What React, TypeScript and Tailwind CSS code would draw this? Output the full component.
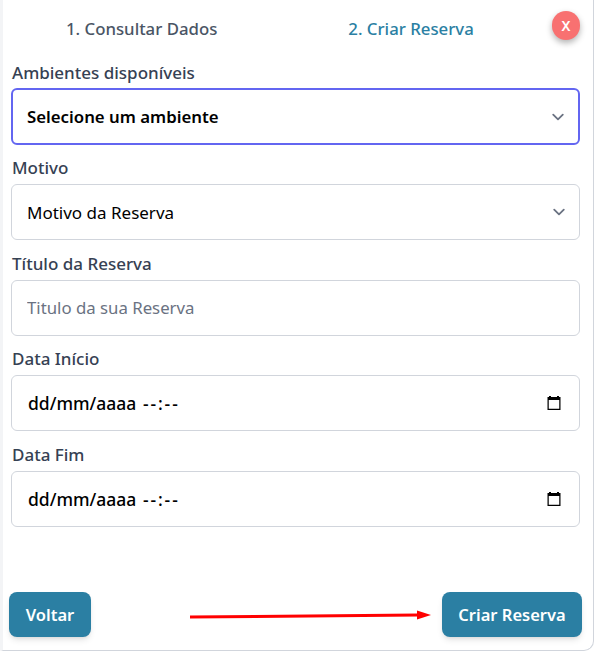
const font = { fontFamily: '"Noto Sans", sans-serif' };

function Chevron() {
  return (
    <svg className="absolute right-[8px] top-1/2 -translate-y-1/2 w-[24px] h-[24px] text-gray-500" viewBox="0 0 20 20" fill="none">
      <path d="M6 8l4 4 4-4" stroke="currentColor" strokeWidth="1.5" strokeLinecap="round" strokeLinejoin="round" />
    </svg>
  );
}

function CalendarIcon() {
  return (
    <svg className="w-[16px] h-[16px]" viewBox="0 0 16 16" fill="none">
      <path d="M3 1h2v1h6V1h2v1h1.5v13h-13V2H3z" fill="#000" />
      <rect x="2.75" y="5" width="10.5" height="8.75" fill="#fff" />
    </svg>
  );
}

function Field({ label, children, cls, gap = "mb-[4px]" }: { label: string; children: React.ReactNode; cls: string; gap?: string }) {
  return (
    <div className={cls}>
      <label className={`block ml-[1px] text-[17px] leading-[24px] font-medium text-gray-700 ${gap}`}>{label}</label>
      {children}
    </div>
  );
}

function DateField() {
  return (
    <div className="flex items-center justify-between h-[56px] pl-[16px] pr-[17px] bg-white border border-gray-300 rounded-[6px] text-[17.5px] font-medium text-black">
      <span>
        dd/mm/aaaa <span className="ml-[2px] tracking-[1.9px]">--:--</span>
      </span>
      <CalendarIcon />
    </div>
  );
}

export default function App() {
  return (
    <div style={font} className="w-[594px] h-[651px] bg-white overflow-hidden">
      <div className="relative h-full flex flex-col bg-white border-b border-r border-gray-300 rounded-br-[10px] border-l-[3px] border-l-gray-100">
        <div className="flex h-[61px] pl-[63px] pt-[17px] text-[16.8px] leading-[24px] font-medium">
          <span className="text-gray-600">1. Consultar Dados</span>
          <span className="ml-[131px] text-[#2b7fa3]">2. Criar Reserva</span>
        </div>
        <button className="absolute top-[11px] right-[13px] w-[28px] h-[29px] rounded-full bg-[#f87171] text-white text-[14px] font-semibold shadow-[0_3px_6px_rgba(0,0,0,0.3)]">
          X
        </button>

        <div className="pl-[8px] pr-[13px]">
          <Field label="Ambientes disponíveis" cls="" gap="mb-[3px]">
            <div className="relative flex items-center h-[57px] pl-[14px] border-2 border-[#6366f1] rounded-[6px] text-[16.8px] font-semibold text-black">
              Selecione um ambiente
              <Chevron />
            </div>
          </Field>
          <Field label="Motivo" cls="mt-[11px]">
            <div className="relative flex items-center h-[56px] pl-[15px] pt-[1px] border border-gray-300 rounded-[6px] text-[17px] text-black">
              Motivo da Reserva
              <Chevron />
            </div>
          </Field>
          <Field label="Título da Reserva" cls="mt-[12px]">
            <input
              placeholder="Titulo da sua Reserva"
              className="block w-full h-[56px] px-[15px] pb-[2px] border border-gray-300 rounded-[6px] text-[16.8px] placeholder:text-gray-500 outline-none"
            />
          </Field>
          <Field label="Data Início" cls="mt-[11px]">
            <DateField />
          </Field>
          <Field label="Data Fim" cls="mt-[12px]">
            <DateField />
          </Field>
        </div>

        <div className="mt-auto mb-[13px] flex items-center pl-[6px] pr-[11px]">
          <button className="w-[82px] h-[45px] pt-[1px] rounded-[8px] bg-[#2b7fa3] text-white text-[16.5px] font-semibold shadow-md">
            Voltar
          </button>
          <svg className="ml-[99px] w-[241px] h-[14px]" viewBox="0 0 241 14" fill="none">
            <path d="M0 9 L228 7" stroke="#ff0000" strokeWidth="3" strokeLinecap="round" />
            <path d="M227 2.5 L241 7 L227 11.5z" fill="#ff0000" />
          </svg>
          <button className="ml-auto w-[140px] h-[45px] pt-[1px] rounded-[8px] bg-[#2b7fa3] text-white text-[16.5px] font-semibold shadow-md">
            Criar Reserva
          </button>
        </div>
      </div>
    </div>
  );
}
